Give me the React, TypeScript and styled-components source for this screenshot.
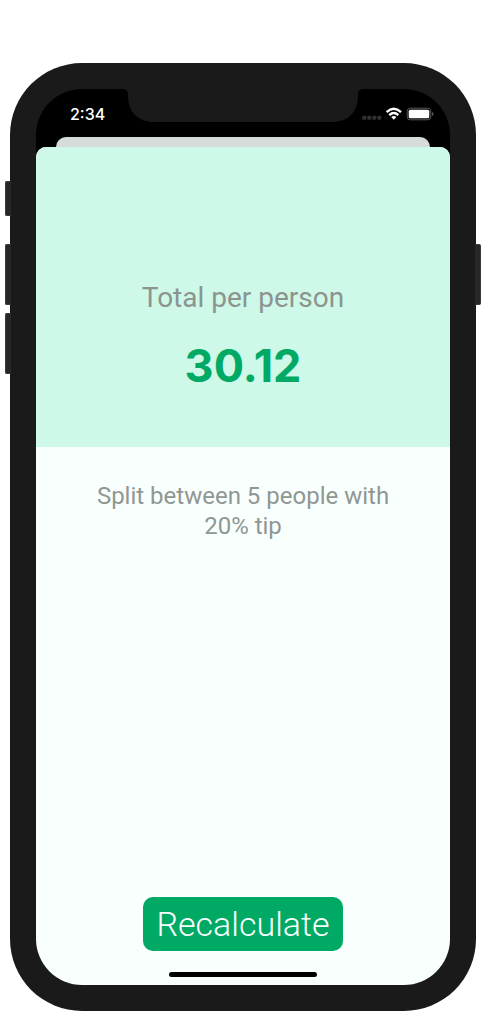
import React from "react";
import styled, { createGlobalStyle } from "styled-components";

const GlobalStyle = createGlobalStyle`
  *, *::before, *::after { box-sizing: border-box; }
  body {
    margin: 0;
    background: #ffffff;
    font-family: Roboto, "Liberation Sans", sans-serif;
  }
`;

const Page = styled.div`
  display: flex;
  flex-direction: column;
  min-height: 100vh;
  padding: 63px 10px 1px;
`;

const Phone = styled.div`
  position: relative;
  display: flex;
  flex: 1;
  padding: 26px;
  border-radius: 72px;
  background: #1a1a1a;
`;

const SideKey = styled.span<{ $side: "left" | "right"; $top: number; $length: number }>`
  position: absolute;
  ${({ $side }) => $side}: -5px;
  top: ${({ $top }) => $top}px;
  width: 6px;
  height: ${({ $length }) => $length}px;
  border: 1px solid #38393a;
  border-${({ $side }) => ($side === "left" ? "right" : "left")}: 0;
  border-radius: ${({ $side }) => ($side === "left" ? "2px 0 0 2px" : "0 2px 2px 0")};
  background: #262727;
`;

const Screen = styled.div`
  position: relative;
  display: flex;
  flex: 1;
  flex-direction: column;
  overflow: hidden;
  border-radius: 46px;
  background: #000000;
`;

const Notch = styled.svg`
  position: absolute;
  top: 0;
  left: 50%;
  width: 242px;
  height: 33px;
  transform: translateX(-50%);
`;

const StatusBar = styled.header`
  display: flex;
  align-items: center;
  justify-content: space-between;
  height: 48px;
  padding: 2px 16px 0 34px;
  color: #ffffff;
`;

const Time = styled.time`
  font-family: Inter, "Liberation Sans", sans-serif;
  font-size: 16px;
  font-weight: 500;
  line-height: 20px;
`;

const StatusIcons = styled.svg`
  width: 72px;
  height: 14px;
`;

const PreviousSheet = styled.div`
  height: 10px;
  margin: 0 20px;
  border-radius: 10px 10px 0 0;
  background: #d6dcda;
`;

const Sheet = styled.main`
  display: flex;
  flex: 1;
  flex-direction: column;
  align-items: center;
  overflow: hidden;
  border-radius: 10px 10px 0 0;
  background: #f9fffd;
`;

const Result = styled.section`
  display: flex;
  flex-direction: column;
  align-items: center;
  justify-content: flex-end;
  gap: 23px;
  width: 100%;
  height: 300px;
  padding-bottom: 54px;
  background: #cef8e8;
`;

const Label = styled.h1`
  margin: 0;
  color: #8c9490;
  font-size: 28px;
  font-weight: 400;
  line-height: 36px;
`;

const Amount = styled.output`
  color: #00a964;
  font-family: Inter, "Liberation Sans", sans-serif;
  font-size: 45px;
  font-weight: 700;
  line-height: 54px;
`;

const Summary = styled.p`
  max-width: 314px;
  margin: 34px 0 auto;
  color: #8f9793;
  font-size: 24px;
  line-height: 30px;
  text-align: center;
`;

const Recalculate = styled.button`
  width: 200px;
  height: 54px;
  margin: 32px 0 21px;
  padding: 0;
  border: 0;
  border-radius: 10px;
  background: #00a964;
  color: #f9fffd;
  font-family: inherit;
  font-size: 34px;
  font-weight: 300;
  line-height: 54px;
  cursor: pointer;
`;

const HomeIndicator = styled.div`
  width: 148px;
  height: 5px;
  margin-bottom: 8px;
  border-radius: 3px;
  background: #000000;
`;

export default function App() {
  return (
    <>
      <GlobalStyle />
      <Page>
        <Phone>
          <SideKey $side="left" $top={118} $length={35} />
          <SideKey $side="left" $top={181} $length={61} />
          <SideKey $side="left" $top={250} $length={61} />
          <SideKey $side="right" $top={181} $length={61} />
          <Screen>
            <StatusBar>
              <Time>2:34</Time>
              <StatusIcons viewBox="0 0 72 14" role="img" aria-label="Wi-Fi connected, battery full">
                <g fill="#303030">
                  <rect x="0.3" y="8.8" width="4" height="4" rx="1" />
                  <rect x="5.3" y="8.8" width="4" height="4" rx="1" />
                  <rect x="10.3" y="8.8" width="4" height="4" rx="1" />
                  <rect x="15.3" y="8.8" width="4" height="4" rx="1" />
                </g>
                <g fill="none" stroke="#ffffff" strokeWidth="2.4">
                  <path d="M24.6 5.1 Q31.8 -1.4 39 5.1" />
                  <path d="M27.3 8.1 Q31.8 4 36.3 8.1" />
                </g>
                <path d="M29.2 10 Q31.8 8 34.4 10 L31.8 12.8 Z" fill="#ffffff" />
                <rect x="45.2" y="1.2" width="23.6" height="11.6" rx="3" fill="none" stroke="#58585a" />
                <rect x="46.7" y="2.7" width="20.6" height="8.6" rx="1.6" fill="#ffffff" />
                <path d="M70 5 Q71.6 5.4 71.6 7 Q71.6 8.6 70 9 Z" fill="#58585a" />
              </StatusIcons>
            </StatusBar>
            <Notch viewBox="0 0 242 33" aria-hidden="true">
              <path
                d="M0 0 C5 0 6 2 6 7 C6 23 16 33 32 33 H210 C226 33 236 23 236 7 C236 2 237 0 242 0 Z"
                fill="#1a1a1a"
              />
            </Notch>
            <PreviousSheet />
            <Sheet>
              <Result>
                <Label>Total per person</Label>
                <Amount>30.12</Amount>
              </Result>
              <Summary>Split between 5 people with 20% tip</Summary>
              <Recalculate type="button">Recalculate</Recalculate>
              <HomeIndicator />
            </Sheet>
          </Screen>
        </Phone>
      </Page>
    </>
  );
}
